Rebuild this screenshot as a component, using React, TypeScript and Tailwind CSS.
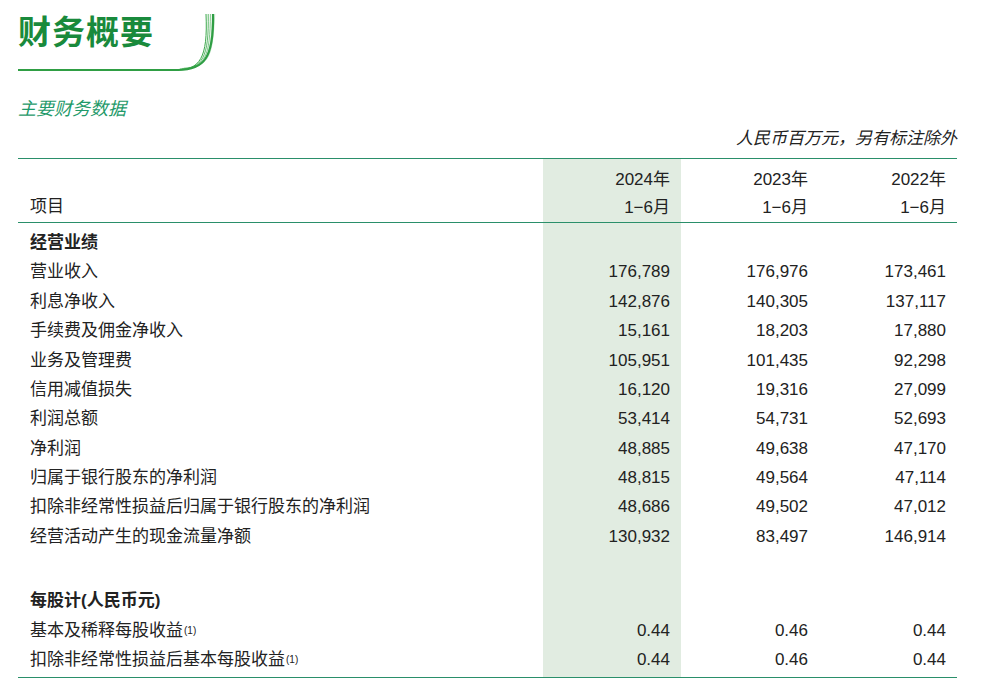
const rows: [string, string, string, string][] = [
  ["营业收入", "176,789", "176,976", "173,461"],
  ["利息净收入", "142,876", "140,305", "137,117"],
  ["手续费及佣金净收入", "15,161", "18,203", "17,880"],
  ["业务及管理费", "105,951", "101,435", "92,298"],
  ["信用减值损失", "16,120", "19,316", "27,099"],
  ["利润总额", "53,414", "54,731", "52,693"],
  ["净利润", "48,885", "49,638", "47,170"],
  ["归属于银行股东的净利润", "48,815", "49,564", "47,114"],
  ["扣除非经常性损益后归属于银行股东的净利润", "48,686", "49,502", "47,012"],
  ["经营活动产生的现金流量净额", "130,932", "83,497", "146,914"],
];

function Row({ label, a, b, c, bold, sup, h = "h-[29.4px]" }: { label: string; a?: string; b?: string; c?: string; bold?: boolean; sup?: boolean; h?: string }) {
  return (
    <div className={`flex ${h} items-center`}>
      <div className={`w-[525px] pl-[12px] ${bold ? "font-bold" : ""}`}>
        {label}
        {sup && <sup className="text-[10px] ml-[1px] relative top-[-2px]">(1)</sup>}
      </div>
      <div className="w-[138px] h-full flex items-center justify-end pr-[11px] bg-[#e1ece1]">{a}</div>
      <div className="w-[138px] text-right pr-[11px]">{b}</div>
      <div className="w-[138px] text-right pr-[11px]">{c}</div>
    </div>
  );
}

export default function App() {
  return (
    <div className="w-[1002px] h-[698px] bg-white text-[#222] overflow-hidden" style={{ fontFamily: '"Liberation Sans","Noto Sans CJK SC",sans-serif' }}>
      <div className="relative ml-[18px] mt-[10px] w-[200px] h-[62px]">
        <div className="text-[33px] font-bold text-[#198a3c] leading-none pt-[6px] tracking-[1px]">财务概要</div>
        <svg className="absolute left-0 top-0" width="200" height="62" viewBox="0 0 200 62">
          {[0, 1, 2, 3, 4].map((i) => (
            <path key={i} d={`M${158 + i * 2} ${60 - i * 0.5} C ${182 + i * 3} ${60 - i} ${190 + i * 1} ${48 - i} ${188 + i * 2.2} 4`} fill="none" stroke="#3aa84a" strokeOpacity={1 - i * 0.18} strokeWidth="1" />
          ))}
          <path d="M0 60 L160 60 C 186 60 196 48 195 4" fill="none" stroke="#2f9e44" strokeWidth="2.2" />
        </svg>
      </div>
      <div className="ml-[18px] mt-[28px] text-[18px] italic text-[#1f9a6a] leading-none">主要财务数据</div>
      <div className="w-[957px] text-right mt-[12px] text-[17px] italic leading-none">人民币百万元，另有标注除外</div>
      <div className="ml-[18px] mt-[11px] w-[939px] text-[17px] border-t-[1.5px] border-b-[1.5px] border-[#2a8f6a]">
        <div className="flex h-[63px]">
          <div className="w-[525px] pl-[12px] flex items-end pb-[3px]">项目</div>
          {["2024", "2023", "2022"].map((y, i) => (
            <div key={y} className={`w-[138px] pr-[11px] flex flex-col items-end justify-center pt-[6px] leading-[28px] ${i === 0 ? "bg-[#e1ece1]" : ""}`}>
              <div>{y}年</div>
              <div>1−6月</div>
            </div>
          ))}
        </div>
        <div className="border-t-[1.5px] border-[#2a8f6a]">
          <div className="flex h-[5px]"><div className="w-[525px]" /><div className="w-[138px] bg-[#e1ece1]" /></div>
          <Row label="经营业绩" bold />
          {rows.map((r) => <Row key={r[0]} label={r[0]} a={r[1]} b={r[2]} c={r[3]} />)}
          <Row label="" h="h-[35px]" />
          <Row label="每股计(人民币元)" bold />
          <Row label="基本及稀释每股收益" sup a="0.44" b="0.46" c="0.44" />
          <Row label="扣除非经常性损益后基本每股收益" sup a="0.44" b="0.46" c="0.44" />
          <Row label="" h="h-[3px]" />
        </div>
      </div>
    </div>
  );
}
